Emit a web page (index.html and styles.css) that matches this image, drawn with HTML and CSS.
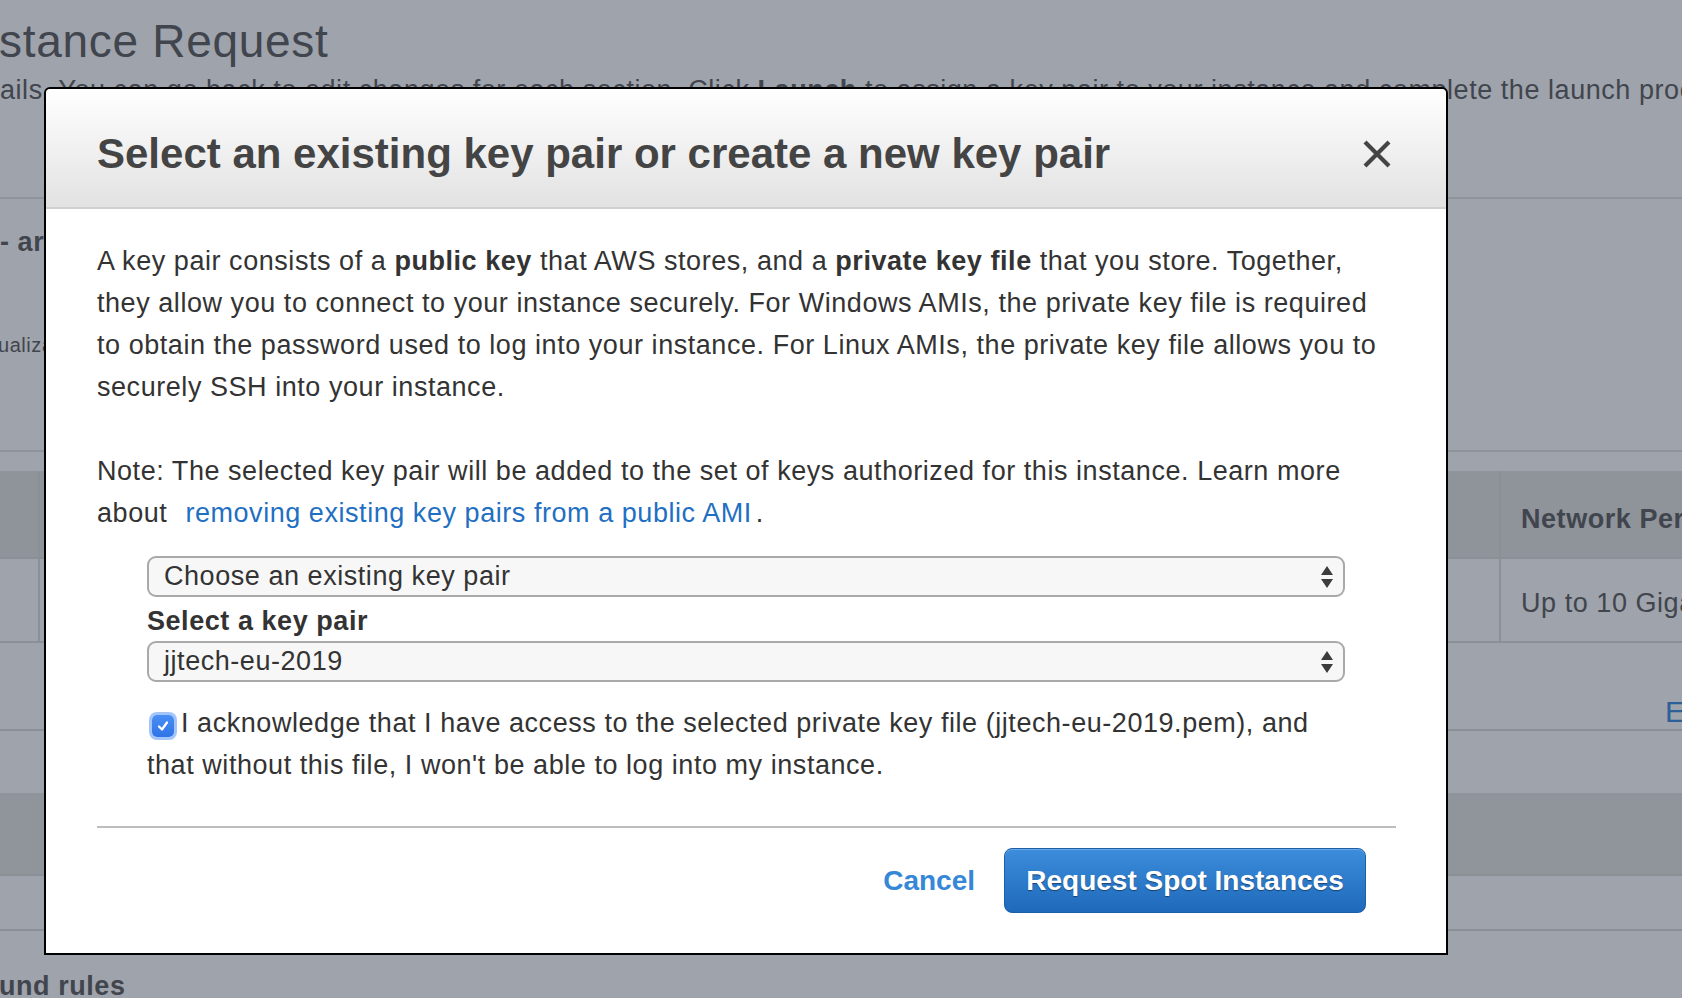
FILE: index.html
```html
<!DOCTYPE html>
<html lang="en">
<head>
<meta charset="utf-8">
<title>Select key pair</title>
<link rel="stylesheet" href="styles.css">
</head>
<body>
<div class="page">
  <h1 class="page-title">stance Request</h1>
  <p class="page-sub">ails. You can go back to edit changes for each section. Click <b>Launch</b> to assign a key pair to your instance and complete the launch process.</p>
  <div class="rule rule-top"></div>
  <h2 class="section-head">- ar</h2>
  <p class="section-note">ualization</p>
  <div class="rule rule-table"></div>
  <div class="table">
    <div class="trow thead">
      <div class="cell c-first"></div>
      <div class="cell c-mid"></div>
      <div class="cell c-last">Network Performance</div>
    </div>
    <div class="trow tbody">
      <div class="cell c-first"></div>
      <div class="cell c-mid"></div>
      <div class="cell c-last">Up to 10 Gigabit</div>
    </div>
  </div>
  <div class="edit-row"><a class="edit-link">Edit</a></div>
  <div class="band"></div>
  <div class="band-gap"></div>
  <h2 class="section-head bottom-head">und rules</h2>
</div>

<div class="modal">
  <div class="modal-header">
    <h3 class="modal-title">Select an existing key pair or create a new key pair</h3>
    <button class="close" aria-label="Close">
      <svg width="30" height="30" viewBox="0 0 30 30"><path d="M3 3 L27 27 M27 3 L3 27" stroke="#444" stroke-width="4.2" stroke-linecap="butt" fill="none"/></svg>
    </button>
  </div>
  <div class="modal-body">
    <p class="para">A key pair consists of a <b>public key</b> that AWS stores, and a <b>private key file</b> that you store. Together, they allow you to connect to your instance securely. For Windows AMIs, the private key file is required to obtain the password used to log into your instance. For Linux AMIs, the private key file allows you to securely SSH into your instance.</p>
    <p class="para note">Note: The selected key pair will be added to the set of keys authorized for this instance. Learn more about <a class="link">removing existing key pairs from a public AMI</a>.</p>
    <div class="form">
      <div class="select">
        <span class="select-text">Choose an existing key pair</span>
        <svg class="arrows" width="14" height="24" viewBox="0 0 14 24"><path d="M7 1 L13 10 L1 10 Z M1 14 L13 14 L7 23 Z" fill="#3c3c3c"/></svg>
      </div>
      <div class="label">Select a key pair</div>
      <div class="select">
        <span class="select-text">jjtech-eu-2019</span>
        <svg class="arrows" width="14" height="24" viewBox="0 0 14 24"><path d="M7 1 L13 10 L1 10 Z M1 14 L13 14 L7 23 Z" fill="#3c3c3c"/></svg>
      </div>
      <p class="ack"><span class="checkbox"><svg width="14" height="14" viewBox="0 0 14 14"><path d="M3 7.5 L6 10.5 L11 3.5" stroke="#fff" stroke-width="2.2" fill="none" stroke-linecap="round" stroke-linejoin="round"/></svg></span>I acknowledge that I have access to the selected private key file (jjtech-eu-2019.pem), and that without this file, I won't be able to log into my instance.</p>
    </div>
    <div class="divider"></div>
    <div class="footer">
      <a class="cancel">Cancel</a>
      <button class="primary">Request Spot Instances</button>
    </div>
  </div>
</div>
</body>
</html>
```

FILE: styles.css
```css
* { box-sizing: border-box; }
html, body { margin: 0; padding: 0; }
body {
  width: 1682px;
  height: 998px;
  overflow: hidden;
  background: #9fa3ab;
  font-family: "Liberation Sans", Arial, Helvetica, sans-serif;
  color: #41454d;
  position: relative;
}
.page { width: 1682px; letter-spacing: 0.55px; }
.page-title {
  margin: 15px 0 0 -1px;
  font-size: 46px;
  line-height: 52px;
  font-weight: normal;
  letter-spacing: 0.7px;
  white-space: nowrap;
}
.page-sub {
  margin: 8px 0 0 0;
  font-size: 27px;
  line-height: 30px;
  white-space: nowrap;
}
.rule { height: 2px; background: #8f939a; }
.rule-top { margin-top: 92px; }
.section-head {
  margin: 28px 0 0 0;
  font-size: 27px;
  line-height: 30px;
  font-weight: bold;
  white-space: nowrap;
}
.section-note {
  margin: 76px 0 0 -2px;
  font-size: 20px;
  line-height: 24px;
  white-space: nowrap;
}
.rule-table { margin-top: 93px; }
.table { margin-top: 19px; }
.trow { display: flex; height: 84px; border-bottom: 2px solid #8b8f96; }
.thead { background: #8f939a; height: 88px; }
.cell { display: flex; align-items: center; border-right: 2px solid #8b8f96; font-size: 27px; white-space: nowrap; overflow: hidden; }
.c-first { width: 40px; }
.c-mid { width: 1461px; }
.c-last { flex: 1; padding-left: 20px; padding-top: 6px; border-right: none; }
.thead .c-last { font-weight: bold; padding-top: 10px; }
.edit-row {
  height: 88px;
  border-bottom: 2px solid #8b8f96;
  padding-left: 1665px;
  padding-top: 54px;
  font-size: 30px;
  line-height: 30px;
  white-space: nowrap;
  overflow: hidden;
}
.edit-link { color: #2d5f98; }
.band { margin-top: 62px; height: 83px; background: #90949b; border-bottom: 2px solid #8b8f96; }
.band-gap { height: 55px; border-bottom: 2px solid #8b8f96; }
.bottom-head { margin-top: 40px; margin-left: -1px; }

/* modal */
.modal {
  position: absolute;
  left: 44px;
  top: 87px;
  width: 1404px;
  height: 868px;
  background: #fff;
  border: 2px solid #000;
  border-radius: 6px 6px 0 0;
  display: flex;
  flex-direction: column;
  color: #333;
}
.modal-header {
  height: 120px;
  flex: none;
  display: flex;
  align-items: center;
  justify-content: space-between;
  padding: 12px 54px 0 51px;
  background: linear-gradient(#ffffff, #e2e2e2);
  border-bottom: 2px solid #d0d0d0;
  border-radius: 5px 5px 0 0;
}
.modal-title {
  margin: 0;
  font-size: 42px;
  font-weight: bold;
  color: #444;
  white-space: nowrap;
}
.close {
  border: none;
  background: none;
  padding: 0;
  width: 30px;
  height: 30px;
  display: flex;
}
.modal-body {
  padding: 31px 50px 0 51px;
  font-size: 27px;
  line-height: 42px;
  letter-spacing: 0.55px;
}
.para { margin: 0 0 42px 0; }
.note { margin-bottom: 22px; }
.link { color: #1f6fc2; padding: 0 4px 0 10px; }
.form { margin: 0 51px 0 50px; }
.select {
  height: 41px;
  border: 2px solid #a9a9a9;
  border-radius: 9px;
  background: #f7f7f7;
  display: flex;
  align-items: center;
  justify-content: space-between;
  padding: 0 9px 0 15px;
  line-height: 37px;
}
.select-text { color: #333; }
.label { font-weight: bold; line-height: 44px; height: 44px; padding-top: 2px; }
.ack { margin: 20px 0 0 0; }
.checkbox {
  display: inline-flex;
  align-items: center;
  justify-content: center;
  width: 22px;
  height: 22px;
  margin: 0 7px 0 5px;
  vertical-align: -1px;
  border-radius: 5px;
  background: linear-gradient(#4a8ff5, #2f74e6);
  box-shadow: 0 0 0 3px rgba(90, 150, 245, 0.55);
}
.divider { height: 2px; background: #bdbdbd; margin-top: 40px; }
.footer {
  display: flex;
  justify-content: flex-end;
  align-items: center;
  gap: 29px;
  margin-top: 20px;
  padding-right: 30px;
  letter-spacing: 0;
}
.cancel {
  font-size: 28px;
  font-weight: bold;
  color: #3687d8;
}
.primary {
  width: 362px;
  height: 65px;
  border: 1px solid #1c5fa8;
  border-radius: 8px;
  background: linear-gradient(#3c8ddc, #1f69ba);
  box-shadow: inset 0 1px 0 rgba(255, 255, 255, 0.25);
  color: #fff;
  font-family: "Liberation Sans", Arial, sans-serif;
  font-size: 28px;
  font-weight: bold;
  text-shadow: 0 1px 1px rgba(0, 0, 0, 0.45);
  padding: 0;
}
```
